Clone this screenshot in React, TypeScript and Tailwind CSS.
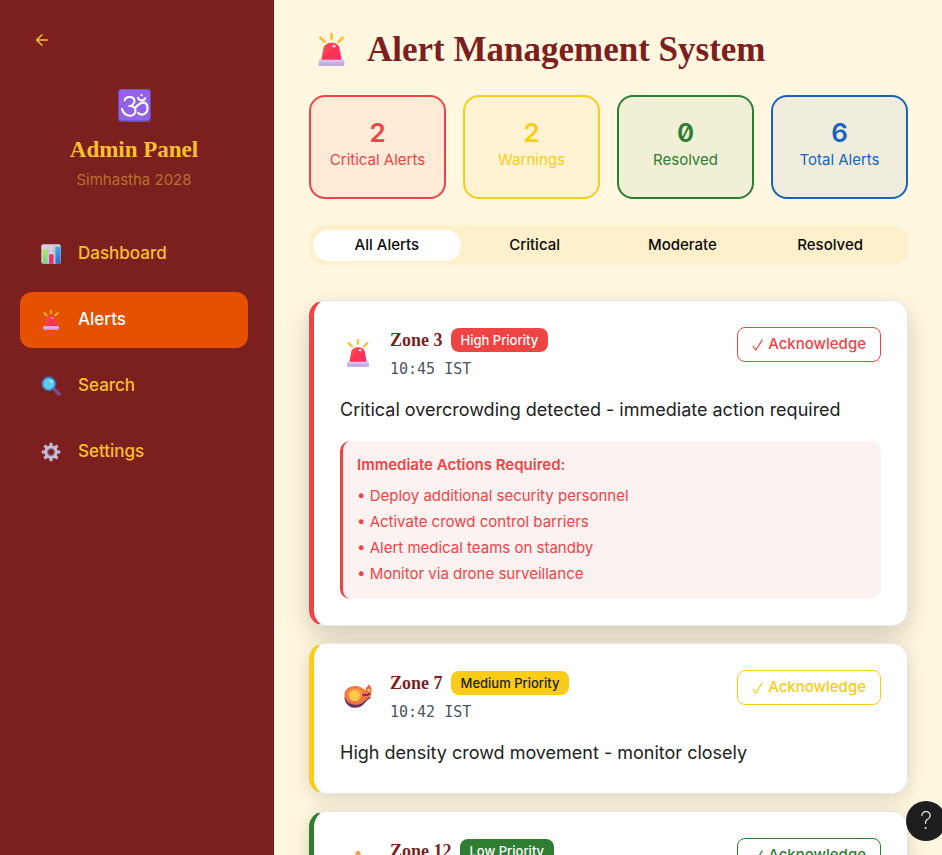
import { useState } from "react";
import { ArrowLeft } from "lucide-react";

type IconProps = { className?: string };

function SirenIcon({ className }: IconProps) {
  return (
    <svg viewBox="0 0 32 32" className={className} aria-hidden="true">
      <defs>
        <linearGradient id="sirenDome" x1="0" y1="0" x2="1" y2="1">
          <stop offset="0" stopColor="#f75a5f" />
          <stop offset="0.5" stopColor="#ff3350" />
          <stop offset="1" stopColor="#f0307a" />
        </linearGradient>
        <linearGradient id="sirenBase" x1="0" y1="0" x2="0" y2="1">
          <stop offset="0" stopColor="#dccbf3" />
          <stop offset="1" stopColor="#b49bdc" />
        </linearGradient>
      </defs>
      <g stroke="#fbc02d" strokeWidth="2.6" strokeLinecap="round">
        <path d="M16 1.3v4.2" />
        <path d="M5.2 4.6l4 4" />
        <path d="M26.8 4.6l-4 4" />
      </g>
      <path d="M6 27L8.2 14.800C9.200 7.600 22.800 7.600 23.800 14.800L26 27z" fill="url(#sirenDome)" />
      <ellipse cx="18.4" cy="12.8" rx="1.7" ry="1.4" fill="#ffc1cf" />
      <rect x="3.5" y="26" width="25" height="5.8" rx="1" fill="url(#sirenBase)" />
    </svg>
  );
}

function DiyaIcon({ className }: IconProps) {
  return (
    <svg viewBox="0 0 32 32" className={className} aria-hidden="true">
      <path d="M0.500 17c0 8 6 12.500 12.500 12.500 9 0 11-8 18-11.500l-4-3z" fill="#6b3460" />
      <path d="M0.500 14C0.500 8 7 4.500 13 4.500c6 0 9 3.500 12 5.500l6 2c1 4-2 6-6 8.500-4 3-6 5.500-12 5.500C6 26 0.500 21 0.500 14z" fill="#f4743c" />
      <path d="M4 14c0-4 4-7 9-7 5 0 8 3 10 5-2 4-5 10.500-11 10.500C7.500 22.500 4 18.500 4 14z" fill="#ff9146" />
      <ellipse cx="12" cy="15.500" rx="6.200" ry="6.300" fill="#ffc847" />
      <path d="M21 14c3 1.500 6 1.500 9-1" fill="none" stroke="#66304f" strokeWidth="2" />
      <path d="M28.500 2.500c-2 3-4 4-3.500 7.500.4 3.300 6 3.300 6.500 0 .3-2.500-1.500-5.500-3-7.500z" fill="#fb5b4e" />
      <ellipse cx="28.300" cy="9.500" rx="1.500" ry="2" fill="#ffd75a" />
      <circle cx="21" cy="22.500" r="1" fill="#30b98c" />
      <circle cx="26" cy="19" r="1" fill="#e94072" />
      <circle cx="7" cy="24" r="1" fill="#e94072" />
    </svg>
  );
}

function BellIcon({ className }: IconProps) {
  return (
    <svg viewBox="0 0 32 32" className={className} aria-hidden="true">
      <circle cx="16" cy="4" r="3" fill="#f0a040" />
      <path d="M5 24l3-6v-5c0-10 16-10 16 0v5l3 6z" fill="#fbb83c" />
      <rect x="3" y="23" width="26" height="4" rx="2" fill="#f19a35" />
      <path d="M12 27a4 4 0 0 0 8 0z" fill="#b06a38" />
    </svg>
  );
}

function ChartIcon({ className }: IconProps) {
  return (
    <svg viewBox="0 0 32 32" className={className} aria-hidden="true">
      <defs>
        <linearGradient id="barGreen" x1="0" y1="0" x2="0" y2="1">
          <stop offset="0" stopColor="#b4e84c" />
          <stop offset="1" stopColor="#5fd98c" />
        </linearGradient>
        <linearGradient id="barBlue" x1="0" y1="0" x2="0" y2="1">
          <stop offset="0" stopColor="#3bb0f4" />
          <stop offset="1" stopColor="#2a6fc4" />
        </linearGradient>
      </defs>
      <rect x="0.500" y="0.500" width="31" height="31" rx="3" fill="#d9d0e0" />
      <path d="M1 11h30M1 21h30M11 1v30M21 1v30" stroke="#b5a9bf" strokeWidth="1" />
      <rect x="3" y="8.500" width="7" height="23" rx="1" fill="url(#barGreen)" />
      <rect x="13" y="16.500" width="7" height="15" rx="1" fill="#e22f6c" />
      <rect x="23" y="4" width="8" height="27.500" rx="1" fill="url(#barBlue)" />
    </svg>
  );
}

function SearchIcon({ className }: IconProps) {
  return (
    <svg viewBox="0 0 32 32" className={className} aria-hidden="true">
      <path d="M20 20l3 3" stroke="#a594b4" strokeWidth="3" />
      <path d="M23.500 23.500l5 5" stroke="#7d4a86" strokeWidth="6.500" strokeLinecap="round" />
      <circle cx="12.500" cy="12.500" r="10.700" fill="#5ccbea" stroke="#3f66b0" strokeWidth="2.600" />
      <circle cx="16.500" cy="8.500" r="2.200" fill="#a8ecfa" />
    </svg>
  );
}

function GearIcon({ className }: IconProps) {
  return (
    <svg viewBox="0 0 32 32" className={className} aria-hidden="true">
      <g stroke="#c3b3d0" strokeWidth="5.500" strokeLinecap="round">
        <path d="M16 3.500v25M3.500 16h25M7.200 7.200l17.600 17.600M24.800 7.200L7.200 24.800" />
      </g>
      <circle cx="16" cy="16" r="10.500" fill="#c9bcd5" />
      <circle cx="16" cy="16" r="6.600" fill="#8c7d96" />
      <circle cx="16" cy="16" r="4.600" fill="#7b1f1f" />
    </svg>
  );
}

function OmIcon({ className }: IconProps) {
  return (
    <svg viewBox="0 0 32 32" className={className} role="img" aria-label="Om">
      <rect width="32" height="32" rx="3" fill="#6a48b8" />
      <rect x="1" y="0.500" width="30" height="30" rx="3" fill="#9263e6" />
      <g fill="none" stroke="#fff" strokeWidth="2" strokeLinecap="round" strokeLinejoin="round">
        <path d="M6.500 11c.5-4 9.500-4.800 9.500.5 0 3.500-3 5-5 5 4 0 6 1.500 6 4.500 0 6.500-10 7-13.200-1.500" />
        <path d="M16.800 18.200c3-3.500 5-5 7.700-5 5.300 0 5.300 9 1 11-2.500 1.200-5 0-6-1" />
        <path d="M19.500 8.500c1 3.500 5.500 3.500 6.800.500" />
        <path d="M22.800 5.900v.2" />
      </g>
    </svg>
  );
}

function CheckMark({ className }: IconProps) {
  return (
    <svg viewBox="0 0 12 12" className={className} fill="none" stroke="currentColor" strokeWidth="1.2" aria-hidden="true">
      <path d="M0.800 7.200L3.800 11L10.400 0.600" />
    </svg>
  );
}

const navItems = [
  { name: "Dashboard", Icon: ChartIcon },
  { name: "Alerts", Icon: SirenIcon },
  { name: "Search", Icon: SearchIcon },
  { name: "Settings", Icon: GearIcon },
];

const stats = [
  { value: 2, label: "Critical Alerts", style: "border-[#ef4444] bg-[#ffebd8] text-[#ef4444]" },
  { value: 2, label: "Warnings", style: "border-[#facc15] bg-[#fff3d4] text-[#facc15]" },
  { value: 0, label: "Resolved", style: "border-[#2e7d32] bg-[#f2efd7] text-[#2e7d32]" },
  { value: 6, label: "Total Alerts", style: "border-[#1565c0] bg-[#f0eddf] text-[#1565c0]" },
];

const tabs = ["All Alerts", "Critical", "Moderate", "Resolved"];

const alerts = [
  {
    zone: "Zone 3",
    priority: "High Priority",
    time: "10:45 IST",
    message: "Critical overcrowding detected - immediate action required",
    actions: [
      "Deploy additional security personnel",
      "Activate crowd control barriers",
      "Alert medical teams on standby",
      "Monitor via drone surveillance",
    ],
    Icon: SirenIcon,
    card: "border-l-[#ef4444] shadow-[0_10px_26px_rgba(0,0,0,0.18)]",
    badge: "bg-[#ef4444] text-white",
    button: "border-[#ef4444] text-[#ef4444]",
  },
  {
    zone: "Zone 7",
    priority: "Medium Priority",
    time: "10:42 IST",
    message: "High density crowd movement - monitor closely",
    actions: [],
    Icon: DiyaIcon,
    card: "border-l-[#facc15] shadow-[0_4px_20px_rgba(0,0,0,0.15)]",
    badge: "bg-[#facc15] text-[#212121]",
    button: "border-[#facc15] text-[#facc15]",
  },
  {
    zone: "Zone 12",
    priority: "Low Priority",
    time: "10:38 IST",
    message: "Crowd levels normal",
    actions: [],
    Icon: BellIcon,
    card: "border-l-[#2e7d32] shadow-[0_4px_20px_rgba(0,0,0,0.15)]",
    badge: "bg-[#2e7d32] text-white",
    button: "border-[#2e7d32] text-[#2e7d32]",
  },
];

const serif = "font-['Liberation_Serif',serif] font-bold";

export default function App() {
  const [tab, setTab] = useState("All Alerts");

  return (
    <div className="flex h-screen overflow-hidden bg-[#fff7df] font-['Inter',sans-serif] text-[#212121]">
      <aside className="flex w-[274px] shrink-0 flex-col bg-[#7b1f1f] pt-5 pr-[26px] pl-5 text-[#fbc02d]">
        <button type="button" aria-label="Back" className="flex h-10 w-11 items-center justify-center rounded-lg">
          <ArrowLeft size={18} strokeWidth={2} />
        </button>
        <div className="mt-[29px] flex flex-col items-center">
          <OmIcon className="size-[33px]" />
          <h2 className={`mt-3 text-[23px] leading-8 ${serif}`}>Admin Panel</h2>
          <p className="mt-[2px] text-[15px] leading-6 text-[#b9712a]">Simhastha 2028</p>
        </div>
        <nav className="mt-[34px] flex flex-col gap-[10px]">
          {navItems.map(({ name, Icon }) => (
            <a
              key={name}
              href="#"
              className={`flex h-14 items-center gap-4 rounded-xl pl-5 text-[17px] font-medium ${
                name === "Alerts" ? "bg-[#e65100] text-white" : ""
              }`}
            >
              <span className="flex w-[22px] justify-center">
                <Icon className="size-5" />
              </span>
              {name}
            </a>
          ))}
        </nav>
      </aside>

      <main className="min-w-0 flex-1 overflow-y-auto pt-7 pr-[34px] pb-8 pl-[35px] [scrollbar-width:none]">
        <header className="flex h-11 items-center gap-[14px]">
          <span className="flex w-11 justify-center pb-[2px]">
            <SirenIcon className="size-[33px]" />
          </span>
          <h1 className={`text-[35px] leading-10 text-[#7b1f1f] ${serif}`}>Alert Management System</h1>
        </header>

        <section className="mt-[23px] grid grid-cols-4 gap-[17px]">
          {stats.map((s) => (
            <div key={s.label} className={`flex h-[104px] flex-col items-center rounded-2xl border-2 pt-5 ${s.style}`}>
              <span className="text-[26px] leading-8 font-semibold [font-feature-settings:'zero']">{s.value}</span>
              <span className="text-[15px] leading-[22px]">{s.label}</span>
            </div>
          ))}
        </section>

        <div role="tablist" className="mt-[26px] grid h-10 grid-cols-4 items-end rounded-2xl bg-[#fff0cc] px-1 pb-1">
          {tabs.map((t) => (
            <button
              key={t}
              type="button"
              role="tab"
              aria-selected={t === tab}
              onClick={() => setTab(t)}
              className={`h-[31px] rounded-2xl text-[15px] font-medium text-[#0a0a0a] ${t === tab ? "bg-white" : ""}`}
            >
              {t}
            </button>
          ))}
        </div>

        <section className="mt-[35px] flex flex-col gap-[17px]">
          {alerts.map(({ Icon, ...a }) => (
            <article key={a.zone} className={`rounded-2xl border border-l-[5px] border-y-[#e5e7eb] border-r-[#e5e7eb] bg-white p-[26px] ${a.card}`}>
              <div className="flex items-start justify-between">
                <div className="flex items-center gap-[14px]">
                  <span className="flex w-9 justify-center pb-[2px]">
                    <Icon className="size-7" />
                  </span>
                  <div>
                    <div className="flex items-center gap-2">
                      <h3 className={`text-lg leading-[26px] text-[#7b1f1f] ${serif}`}>{a.zone}</h3>
                      <span className={`h-6 rounded-lg px-[10px] text-[13px] leading-6 font-medium ${a.badge}`}>{a.priority}</span>
                    </div>
                    <p className="mt-1 font-['DejaVu_Sans_Mono',monospace] text-[15px] leading-6 text-[#4b5563]">{a.time}</p>
                  </div>
                </div>
                <button
                  type="button"
                  className={`flex h-[35px] items-center gap-1 rounded-lg border px-[14px] text-[15px] font-medium ${a.button}`}
                >
                  <CheckMark className="size-3" />
                  Acknowledge
                </button>
              </div>
              <p className="mt-[14px] text-lg leading-[29px]">{a.message}</p>
              {a.actions.length > 0 && (
                <div className="mt-[17px] rounded-[10px] border-l-[3px] border-[#ef4444] bg-[#fdf2f2] px-[14px] pt-3 pb-3 text-[15px] leading-[26px] text-[#ef4444]">
                  <h4 className="mb-[6px] leading-6 font-semibold">Immediate Actions Required:</h4>
                  <ul>
                    {a.actions.map((item) => (
                      <li key={item}>• {item}</li>
                    ))}
                  </ul>
                </div>
              )}
            </article>
          ))}
        </section>
      </main>

      <button
        type="button"
        aria-label="Help"
        className="fixed -right-1 bottom-[14px] flex size-10 items-center justify-center rounded-full bg-[#1e1e1e] text-2xl font-extralight text-white"
      >
        ?
      </button>
    </div>
  );
}
